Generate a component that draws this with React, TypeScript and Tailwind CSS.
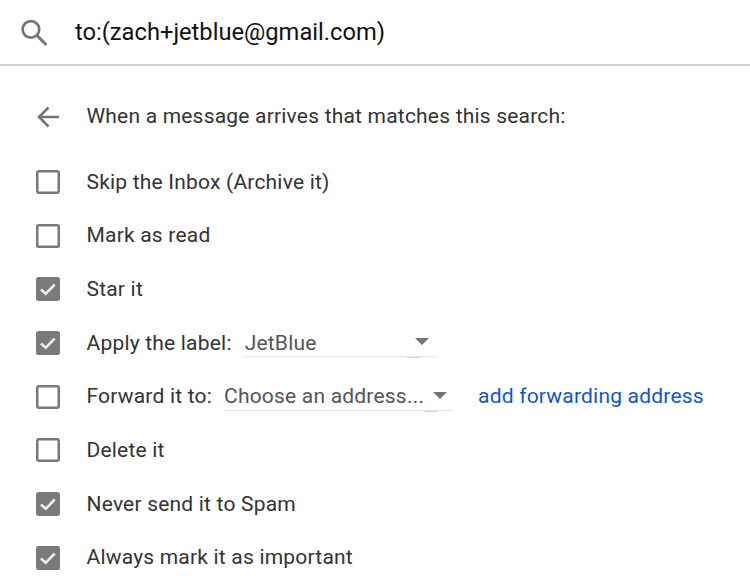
function Box({ checked }: { checked?: boolean }) {
  return checked ? (
    <svg width="24" height="24" viewBox="0 0 24 24" className="shrink-0">
      <rect x="0" y="0" width="24" height="24" rx="2.5" fill="#7a7a7a" />
      <path d="M5 12.5l4.7 4.3 9-9.3" fill="none" stroke="#eeeeee" strokeWidth="2.6" />
    </svg>
  ) : (
    <svg width="24" height="24" viewBox="0 0 24 24" className="shrink-0">
      <rect x="1.25" y="1.25" width="21.5" height="21.5" rx="1.5" fill="none" stroke="#7a7a7a" strokeWidth="2.5" />
    </svg>
  );
}

function Select({ text, width }: { text: string; width: string }) {
  return (
    <div className={`relative flex h-[27px] items-center border-b border-[#e3e5e5] text-[#555] ${width}`}>
      <span className="pt-[1px]">{text}</span>
      <svg width="14" height="7" viewBox="0 0 14 7" className="absolute right-[6px] top-[8px]">
        <path d="M0 0h14L7 7z" fill="#757575" />
      </svg>
      <div className="absolute bottom-[-2px] right-[15px] h-[1px] w-[13px] bg-[#d5d5d5]" />
    </div>
  );
}

function Row({ checked, children }: { checked?: boolean; children: React.ReactNode }) {
  return (
    <div className="flex h-[53.7px] items-center pl-[36px]">
      <Box checked={checked} />
      <div className="ml-[26.5px] flex items-center whitespace-nowrap pt-[1px]">{children}</div>
    </div>
  );
}

export default function App() {
  return (
    <div className="h-[582px] w-[750px] overflow-hidden bg-white font-['Roboto',sans-serif] text-[21px] tracking-[0.2px] text-[#333]">
      <div className="flex h-[66px] items-center border-b-2 border-[#d0d0d0] pl-[19px]">
        <svg width="29" height="29" viewBox="0 0 28 28" className="shrink-0">
          <circle cx="11.5" cy="11" r="8" fill="none" stroke="#757575" strokeWidth="2.6" />
          <path d="M17.5 17l9 9" fill="none" stroke="#757575" strokeWidth="2.8" />
        </svg>
        <span className="ml-[27px] pt-[1px] text-[23.7px] tracking-normal text-[#111]">to:(zach+jetblue@gmail.com)</span>
      </div>
      <div className="flex h-[89px] items-center pl-[36px] pt-[12px]">
        <svg width="24" height="24" viewBox="0 0 24 24" className="shrink-0">
          <path d="M23 12H3M12.5 2.5L3 12l9.5 9.5" fill="none" stroke="#757575" strokeWidth="2.6" />
        </svg>
        <span className="ml-[26.5px]">When a message arrives that matches this search:</span>
      </div>
      <Row>Skip the Inbox (Archive it)</Row>
      <Row>Mark as read</Row>
      <Row checked>Star it</Row>
      <Row checked>
        Apply the label:
        <div className="ml-[13px]"><Select text="JetBlue" width="w-[190px]" /></div>
      </Row>
      <Row>
        Forward it to:
        <div className="ml-[12px]"><Select text="Choose an address..." width="w-[229px]" /></div>
        <span className="ml-[25px] text-[#1155cc]">add forwarding address</span>
      </Row>
      <Row>Delete it</Row>
      <Row checked>Never send it to Spam</Row>
      <Row checked>Always mark it as important</Row>
    </div>
  );
}
